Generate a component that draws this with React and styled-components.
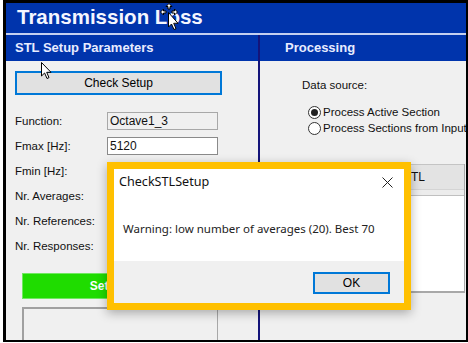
import React from "react";
import styled, { createGlobalStyle } from "styled-components";

const GlobalStyle = createGlobalStyle`
  html, body { margin: 0; padding: 0; background: #ffffff; }
  body { font-family: "Liberation Sans", Arial, sans-serif; }
  * { box-sizing: border-box; }
`;

const Frame = styled.div`
  position: relative;
  margin-left: 3px;
  width: 465px;
  height: 342px;
  border-style: solid;
  border-color: #000;
  border-width: 3px 2px 2px 3px;
  display: flex;
  flex-direction: column;
  background: #f0f0f0;
  overflow: hidden;
`;

const TitleBar = styled.div`
  height: 32px;
  flex: none;
  background: #0034ac;
  border-bottom: 2px solid #c4d0f0;
  color: #f4f6ff;
  font-weight: bold;
  font-size: 20.5px;
  line-height: 28px;
  padding-left: 11px;
`;

const Body = styled.div`
  flex: 1;
  display: flex;
  min-height: 0;
`;

const Column = styled.div`
  display: flex;
  flex-direction: column;
  width: ${(p) => (p.$w ? `${p.$w}px` : "auto")};
  flex: ${(p) => (p.$w ? "none" : "1")};
  border-right: ${(p) => (p.$divider ? "2px solid #14147a" : "none")};
`;

const SectionHeader = styled.div`
  height: 26px;
  flex: none;
  background: #0034ac;
  color: #e8ecff;
  font-weight: bold;
  font-size: 13px;
  line-height: 26px;
  padding-left: ${(p) => p.$pl}px;
`;

const LeftContent = styled.div`
  flex: 1;
  display: flex;
  flex-direction: column;
  padding: 10px 0 0 9px;
`;

const WinButton = styled.button`
  font-family: "Liberation Sans", Arial, sans-serif;
  font-size: ${(p) => p.$fs || 12}px;
  color: #000;
  background: #e1e1e1;
  border: 2px solid #0078d7;
  width: ${(p) => p.$w}px;
  height: ${(p) => p.$h}px;
  padding: 0;
  margin: 0;
`;

const Fields = styled.div`
  display: flex;
  flex-direction: column;
  gap: 7px;
  margin-top: 17px;
`;

const FieldRow = styled.div`
  display: flex;
  align-items: center;
  height: 18px;
`;

const Label = styled.span`
  width: 92px;
  font-size: 11.5px;
  color: #111;
`;

const Input = styled.div`
  width: 111px;
  height: 18px;
  border: 1px solid ${(p) => (p.$disabled ? "#a8a8a8" : "#8a8a8a")};
  background: ${(p) => (p.$disabled ? "#f0f0f0" : "#ffffff")};
  font-size: 12px;
  line-height: 16px;
  padding-left: 2px;
  color: #111;
`;

const GreenButton = styled.div`
  margin: 18px 0 0 7px;
  width: 195px;
  height: 26px;
  background: #1fdc00;
  border: 1px solid #70e860;
  color: #fff;
  font-weight: bold;
  font-size: 12px;
  line-height: 24px;
  text-align: center;
`;

const ListBox = styled.div`
  margin: 8px 0 0 7px;
  width: 196px;
  flex: 1;
  border-style: solid;
  border-color: #a0a0a0 #a8a8a8 transparent #a0a0a0;
  border-width: 2px 1px 0 2px;
  background: #f0f0f0;
`;

const RightContent = styled.div`
  flex: 1;
  display: flex;
  flex-direction: column;
  padding-left: 42px;
`;

const Caption = styled.div`
  margin-top: 17px;
  font-size: 11.5px;
  line-height: 14px;
  color: #111;
`;

const RadioGroup = styled.div`
  margin-top: 12px;
  margin-left: 6px;
  display: flex;
  flex-direction: column;
`;

const RadioRow = styled.div`
  display: flex;
  align-items: center;
  height: 16px;
  font-size: 11.5px;
  color: #111;
  white-space: nowrap;
`;

const RadioCircle = styled.span`
  width: 13px;
  height: 13px;
  border-radius: 50%;
  border: 1px solid #333;
  background: #fff;
  margin-right: 2px;
  display: flex;
  align-items: center;
  justify-content: center;
  flex: none;
  &::after {
    content: "";
    width: 7px;
    height: 7px;
    border-radius: 50%;
    background: ${(p) => (p.$checked ? "#222" : "transparent")};
  }
`;

const Grid = styled.div`
  margin: 28px 2px 0 -32px;
  display: flex;
  flex-direction: column;
  border-right: 1px solid #a8a8a8;
`;

const GridHeader = styled.div`
  height: 26px;
  border-top: 1px solid #c4c4c4;
  border-bottom: 1px solid #d4d4d4;
  background: #e3e3e3;
  font-size: 12px;
  line-height: 24px;
  padding-left: 133px;
  color: #111;
`;

const GridSub = styled.div`
  height: 6px;
  background: #ececec;
  border-bottom: 1px solid #c0c0c0;
`;

const GridBody = styled.div`
  height: 97px;
  background: #fff;
  border-bottom: 2px solid #a8a8a8;
`;

const Dialog = styled.div`
  position: absolute;
  left: 101px;
  top: 159px;
  width: 304px;
  height: 148px;
  border: 7px solid #ffc000;
  box-shadow: 0 3px 10px rgba(0, 0, 0, 0.3);
  display: flex;
  flex-direction: column;
  font-family: "Noto Sans", "Open Sans", sans-serif;
`;

const DialogTop = styled.div`
  flex: 1;
  background: #fff;
  position: relative;
  display: flex;
  flex-direction: column;
`;

const DialogTitle = styled.div`
  margin: 4px 0 0 5px;
  font-size: 12.6px;
  line-height: 17px;
  color: #111;
`;

const CloseBtn = styled.div`
  position: absolute;
  right: 11px;
  top: 8px;
  width: 11px;
  height: 11px;
  display: flex;
`;

const Message = styled.div`
  margin: 31px 0 0 9px;
  font-size: 11.5px;
  line-height: 16px;
  color: #222;
  white-space: nowrap;
`;

const DialogFooter = styled.div`
  height: 42px;
  flex: none;
  background: #f0f0f0;
  display: flex;
  justify-content: flex-end;
  padding: 11px 14px 0 0;
`;

const Cursor = styled.svg`
  position: absolute;
  left: ${(p) => p.$x}px;
  top: ${(p) => p.$y}px;
  pointer-events: none;
`;

const Arrow = ({ x, y }) => (
  <Cursor $x={x} $y={y} width="12" height="18" viewBox="0 0 12 18">
    <path d="M0.5 0.5 L0.5 14 L3.6 11 L6 16.5 L8 15.6 L5.7 10.3 L10 10.3 Z" fill="#fff" stroke="#000" strokeWidth="1" strokeLinejoin="round" />
  </Cursor>
);

const MoveCursor = ({ x, y }) => (
  <Cursor $x={x} $y={y} width="22" height="28" viewBox="0 0 22 28">
    <g stroke="#000" strokeWidth="1" fill="#fff">
      <path d="M9 0.5 L12 3.5 L10 3.5 L10 6 L8 6 L8 3.5 L6 3.5 Z" />
      <path d="M0.5 9 L3.5 6 L3.5 8 L6 8 L6 10 L3.5 10 L3.5 12 Z" />
      <path d="M17.5 9 L14.5 6 L14.5 8 L12 8 L12 10 L14.5 10 L14.5 12 Z" />
    </g>
    <path d="M8.5 9.5 L8.5 24 L11.5 21 L14 26.5 L16 25.6 L13.7 20.3 L18 20.3 Z" fill="#fff" stroke="#000" strokeWidth="1" strokeLinejoin="round" />
  </Cursor>
);

export default function App() {
  return (
    <>
      <GlobalStyle />
      <Frame>
        <TitleBar>Transmission Loss</TitleBar>
        <Body>
          <Column $w={254} $divider>
            <SectionHeader $pl={9}>STL Setup Parameters</SectionHeader>
            <LeftContent>
              <WinButton $w={207} $h={24}>Check Setup</WinButton>
              <Fields>
                <FieldRow>
                  <Label>Function:</Label>
                  <Input $disabled>Octave1_3</Input>
                </FieldRow>
                <FieldRow>
                  <Label>Fmax [Hz]:</Label>
                  <Input>5120</Input>
                </FieldRow>
                <FieldRow>
                  <Label>Fmin [Hz]:</Label>
                  <Input>20</Input>
                </FieldRow>
                <FieldRow>
                  <Label>Nr. Averages:</Label>
                  <Input>20</Input>
                </FieldRow>
                <FieldRow>
                  <Label>Nr. References:</Label>
                  <Input>1</Input>
                </FieldRow>
                <FieldRow>
                  <Label>Nr. Responses:</Label>
                  <Input>1</Input>
                </FieldRow>
              </Fields>
              <GreenButton>Setup STL</GreenButton>
              <ListBox />
            </LeftContent>
          </Column>
          <Column>
            <SectionHeader $pl={25}>Processing</SectionHeader>
            <RightContent>
              <Caption>Data source:</Caption>
              <RadioGroup>
                <RadioRow>
                  <RadioCircle $checked />
                  Process Active Section
                </RadioRow>
                <RadioRow>
                  <RadioCircle />
                  Process Sections from Input
                </RadioRow>
              </RadioGroup>
              <Grid>
                <GridHeader>STL</GridHeader>
                <GridSub />
                <GridBody />
              </Grid>
            </RightContent>
          </Column>
        </Body>
        <Dialog>
          <DialogTop>
            <DialogTitle>CheckSTLSetup</DialogTitle>
            <CloseBtn>
              <svg width="11" height="11" viewBox="0 0 11 11">
                <path d="M0.5 0.5 L10.5 10.5 M10.5 0.5 L0.5 10.5" stroke="#222" strokeWidth="1" />
              </svg>
            </CloseBtn>
            <Message>Warning: low number of averages (20). Best 70</Message>
          </DialogTop>
          <DialogFooter>
            <WinButton $w={77} $h={22} $fs={12}>OK</WinButton>
          </DialogFooter>
        </Dialog>
        <Arrow x={35} y={59} />
        <MoveCursor x={154} y={0} />
      </Frame>
    </>
  );
}
